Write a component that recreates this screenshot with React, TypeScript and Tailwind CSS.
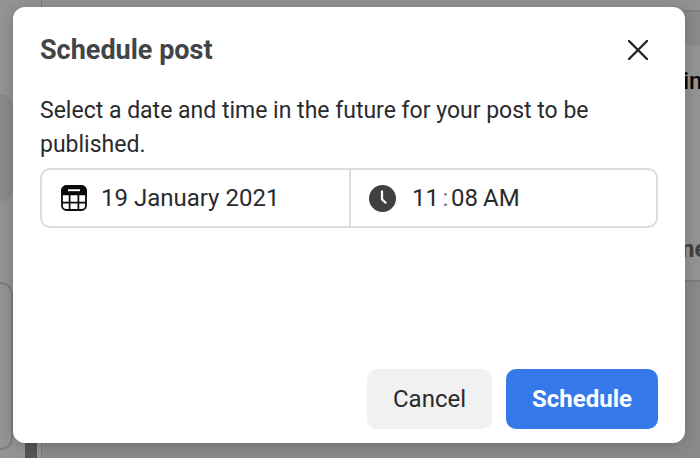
import React, { useState } from 'react';

const CalendarIcon = () => (
  <svg className="w-[26px] h-[26px] shrink-0" viewBox="0 0 26 26" fill="none" aria-hidden="true">
    <rect x="1" y="1" width="24" height="24" rx="4.5" fill="#fff" stroke="#0a0a0a" strokeWidth="1.8" />
    <path d="M.2 10.2V5.5A5.2 5.2 0 0 1 5.5.2h15a5.2 5.2 0 0 1 5.3 5.3v4.7z" fill="#0a0a0a" />
    <path d="M7 5.2h12" stroke="#fff" strokeWidth="1.9" />
    <path d="M1 17.6h24M8.6 10v15M17.4 10v15" stroke="#0a0a0a" strokeWidth="1.7" />
  </svg>
);

const ClockIcon = () => (
  <svg className="w-[27px] h-[27px] shrink-0" viewBox="0 0 27 27" fill="none" aria-hidden="true">
    <circle cx="13.5" cy="13.5" r="13.5" fill="#404042" />
    <path d="M13 6.4v8l3.6 3.3" stroke="#fff" strokeWidth="2.2" strokeLinecap="round" strokeLinejoin="round" />
  </svg>
);

const CloseIcon = () => (
  <svg className="w-5 h-5" viewBox="0 0 20 20" fill="none" stroke="currentColor" aria-hidden="true">
    <path d="M1 1l18 18M19 1L1 19" strokeWidth="2.4" strokeLinecap="round" />
  </svg>
);

// Dimmed page that stays visible around the dialog
const Backdrop = () => (
  <div className="flex min-h-screen bg-[#8a8a8a]" aria-hidden="true">
    <div className="flex w-[42px] shrink-0 border-r border-[#7a7a7a] bg-[#949494]">
      <div className="w-[13px] shrink-0 pt-[94px]">
        <div className="h-[107px] rounded-r-xl bg-[#8a8a8a]"></div>
        <div className="mt-[81px] h-[168px] rounded-r-xl border-2 border-l-0 border-[#7e7e7e]"></div>
      </div>
      <div className="mt-20 ml-3 w-3 bg-[#555555]"></div>
    </div>
    <div className="flex flex-1 flex-col">
      <div className="h-3 border-b-2 border-[#7e7e7e] bg-[#929292]"></div>
      <div className="mt-[33px] flex h-[237px] flex-col items-end justify-between border-b-2 border-[#7c7c7c] bg-[#949494] pt-5 pb-[15px] text-2xl">
        <span className="w-[17px] font-medium text-[#090909]">in</span>
        <span className="w-[19px] font-bold text-[#404040]">ne</span>
      </div>
    </div>
  </div>
);

const App: React.FC = () => {
  const [date, setDate] = useState('19 January 2021');
  const [hour, setHour] = useState('11');
  const [minute, setMinute] = useState('08');
  const [period, setPeriod] = useState('AM');

  return (
    <div className="relative h-screen overflow-hidden font-['Roboto','Liberation_Sans',sans-serif]">
      <Backdrop />
      <div className="absolute inset-0 flex pt-[7px] pr-[15px] pb-[15px] pl-[13px]">
        <div
          role="dialog"
          aria-labelledby="dialog-title"
          className="flex flex-1 flex-col rounded-xl bg-white px-[27px] pt-[27px] pb-[14px] shadow-[0_2px_16px_rgba(0,0,0,0.2)]"
        >
          <header className="flex h-8 items-center justify-between">
            <h2 id="dialog-title" className="text-[27px] font-bold text-[#444446]">Schedule post</h2>
            <button aria-label="Close" className="flex h-8 w-10 items-center justify-center text-[#252525]">
              <CloseIcon />
            </button>
          </header>

          <p className="mt-7 text-[23px] leading-[34px] text-[#2a2b2d]">
            Select a date and time in the future for your post to be published.
          </p>

          <div className="mt-[6px] grid h-[60px] grid-cols-2 rounded-[10px] border-2 border-[#dcdcdc] text-2xl text-[#2a2b2d]">
            <label className="flex min-w-0 items-center gap-[14px] pl-[19px]">
              <CalendarIcon />
              <input
                aria-label="Date"
                className="w-full min-w-0 outline-none"
                value={date}
                onChange={(e) => setDate(e.target.value)}
              />
            </label>
            <div className="flex min-w-0 items-center border-l-2 border-[#dcdcdc] pl-[18px]">
              <ClockIcon />
              <input
                aria-label="Hour"
                className="ml-4 w-7 outline-none"
                value={hour}
                onChange={(e) => setHour(e.target.value)}
              />
              <span className="w-[11px] text-center text-[#77787a]">:</span>
              <input
                aria-label="Minute"
                className="w-7 outline-none"
                value={minute}
                onChange={(e) => setMinute(e.target.value)}
              />
              <input
                aria-label="AM or PM"
                className="ml-1 w-10 outline-none"
                value={period}
                onChange={(e) => setPeriod(e.target.value)}
              />
            </div>
          </div>

          <footer className="mt-auto flex justify-end gap-[14px] text-2xl">
            <button className="h-[60px] rounded-[10px] bg-[#f1f1f1] px-[26px] text-[#2a2b2d]">Cancel</button>
            <button className="h-[60px] rounded-[10px] bg-[#3578e9] px-[26px] font-bold text-white">Schedule</button>
          </footer>
        </div>
      </div>
    </div>
  );
};

export default App;
